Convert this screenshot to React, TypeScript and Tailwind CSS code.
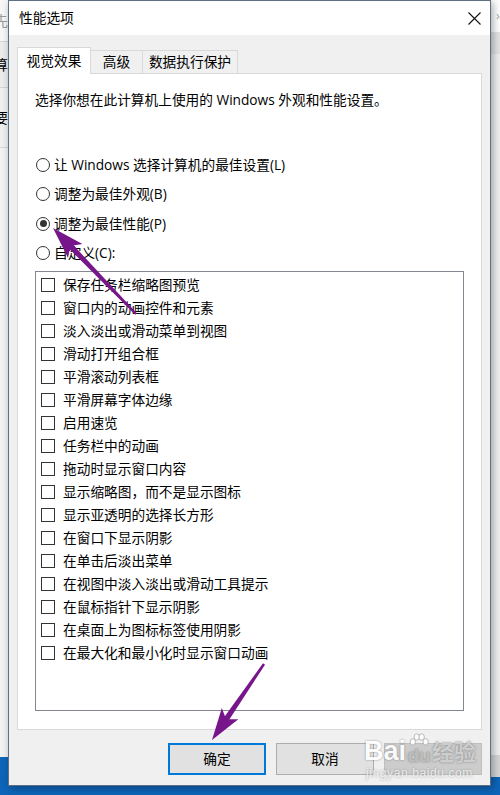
import React from "react";

const items = [
  "保存任务栏缩略图预览",
  "窗口内的动画控件和元素",
  "淡入淡出或滑动菜单到视图",
  "滑动打开组合框",
  "平滑滚动列表框",
  "平滑屏幕字体边缘",
  "启用速览",
  "任务栏中的动画",
  "拖动时显示窗口内容",
  "显示缩略图，而不是显示图标",
  "显示亚透明的选择长方形",
  "在窗口下显示阴影",
  "在单击后淡出菜单",
  "在视图中淡入淡出或滑动工具提示",
  "在鼠标指针下显示阴影",
  "在桌面上为图标标签使用阴影",
  "在最大化和最小化时显示窗口动画",
];

const radios = [
  { label: "让 Windows 选择计算机的最佳设置(L)", checked: false },
  { label: "调整为最佳外观(B)", checked: false },
  { label: "调整为最佳性能(P)", checked: true },
  { label: "自定义(C):", checked: false },
];

function Radio({ checked }: { checked?: boolean }) {
  return (
    <span className="w-[14px] h-[14px] rounded-full border border-[#333333] bg-white flex items-center justify-center shrink-0">
      {checked && <span className="w-[7px] h-[7px] rounded-full bg-[#333333]" />}
    </span>
  );
}

function Arrows() {
  const arrow = (tx: number, ty: number, ex: number, ey: number) => {
    const dx = ex - tx;
    const dy = ey - ty;
    const L = Math.hypot(dx, dy);
    const d = [dx / L, dy / L];
    const n = [-d[1], d[0]];
    const p = (s: number, w: number) => [tx + d[0] * s + n[0] * w, ty + d[1] * s + n[1] * w];
    const head = [p(0, 0), p(32, 10), p(25, 0), p(32, -10)];
    const shaft = [p(24, 2.8), p(L, 1.2), p(L, -1.2), p(24, -2.8)];
    const s = (pts: number[][]) => pts.map((q) => q.join(",")).join(" ");
    return (
      <g fill="#76168a">
        <polygon points={s(shaft)} />
        <polygon points={s(head)} />
      </g>
    );
  };
  return (
    <svg className="absolute left-0 top-0 pointer-events-none" width="500" height="795" viewBox="0 0 500 795">
      {arrow(53, 228, 136, 314)}
      {arrow(212, 740, 264, 664)}
    </svg>
  );
}

function Watermark() {
  return (
    <div className="absolute left-[364px] top-[731px] pointer-events-none flex flex-col items-start">
      <div className="flex items-end h-[34px] text-white font-['Liberation_Sans',sans-serif] [text-shadow:0_0_2px_rgba(80,80,80,0.7)] opacity-90">
        <span className="text-[27px] leading-[28px] font-bold">Bai</span>
        <span className="relative flex flex-col items-center w-[26px]">
          <svg width="22" height="16" viewBox="0 0 22 18" className="mb-[-2px]">
            <g fill="#ffffff" stroke="#9a9a9a" strokeWidth="0.8">
              <ellipse cx="4" cy="10" rx="3" ry="3.6" />
              <ellipse cx="8.5" cy="4.5" rx="3" ry="3.6" />
              <ellipse cx="14" cy="4.5" rx="3" ry="3.6" />
              <ellipse cx="18.5" cy="10" rx="3" ry="3.6" />
            </g>
          </svg>
          <span className="text-[19px] leading-[18px] font-bold text-[#bdbdbd]">du</span>
        </span>
        <span className="text-[22px] leading-[24px] mb-[3px] font-bold font-['Noto_Sans_CJK_SC',sans-serif] text-[#cfcfcf]">经验</span>
      </div>
      <span className="mt-[2px] text-[12px] leading-[13px] text-white/80 font-['Liberation_Sans',sans-serif] [text-shadow:0_0_2px_rgba(80,80,80,0.6)] tracking-[0.6px] ml-[2px]">
        jingyan.baidu.com
      </span>
    </div>
  );
}

export default function App() {
  return (
    <div className="relative w-[500px] h-[795px] overflow-hidden bg-gradient-to-b from-[#2aa4ec] to-[#0d64b8] font-['Open_Sans','Noto_Sans_CJK_SC',sans-serif] text-[#000000]">
      {/* background window */}
      <div className="absolute left-0 top-0 w-[500px] h-[757px] bg-[#f0f0f0] flex flex-col text-[14px] leading-[20px]">
        <div className="h-[42px] bg-[#f7f7f7] border-b border-[#d4d4d4] flex items-center text-[#9a9a9a] -ml-[6px]">先</div>
        <div className="h-[46px] bg-[#ececec] border-b border-[#d4d4d4] flex items-center -ml-[6px]">算</div>
        <div className="h-[60px] flex items-center -ml-[6px] border-b border-[#d8d8d8]">要</div>
        <div className="flex-1 bg-[#f3f3f3]" />
      </div>
      <div className="absolute right-0 top-0 w-[20px] h-[777px] bg-[#f0f0f0] flex flex-col">
        <div className="h-[32px] bg-white flex items-center justify-end text-[#aaaaaa] text-[13px]">›</div>
        <div className="h-[22px] bg-[#e4e4e4]" />
        <div className="flex-1" />
        <div className="h-[22px] bg-[#d6d6d6]" />
      </div>

      {/* dialog */}
      <div className="absolute left-[8px] top-0 w-[483px] h-[786px] border border-[#5f6f84] bg-[#f0f0f0] flex flex-col shadow-[2px_2px_8px_rgba(0,0,0,0.35)]">
        {/* title bar */}
        <div className="h-[34px] bg-white flex items-center justify-between pl-[10px] pr-[9px] shrink-0">
          <span className="text-[13.7px] leading-[20px]">性能选项</span>
          <svg width="13" height="13" viewBox="0 0 13 13">
            <path d="M0.5 0.5 L12.5 12.5 M12.5 0.5 L0.5 12.5" stroke="#111111" strokeWidth="1.1" />
          </svg>
        </div>

        {/* body */}
        <div className="flex-1 flex flex-col pt-[12px] pl-[8px] pr-[8px]">
          {/* tabs */}
          <div className="flex items-end h-[26px] text-[13.7px] leading-[20px]">
            <div className="relative z-10 w-[74px] h-[27px] -mb-px bg-white border border-b-0 border-[#d9d9d9] flex items-center justify-center">
              视觉效果
            </div>
            <div className="-ml-px w-[53px] h-[23px] bg-[#f0f0f0] border border-b-0 border-[#d9d9d9] flex items-center justify-center">
              高级
            </div>
            <div className="-ml-px w-[96px] h-[23px] bg-[#f0f0f0] border border-b-0 border-[#d9d9d9] flex items-center justify-center">
              数据执行保护
            </div>
          </div>

          {/* panel */}
          <div className="h-[657px] w-[465px] bg-white border border-[#d9d9d9] flex flex-col px-[17px] pt-[16px] text-[13.7px]">
            <div className="h-[20px] leading-[20px] whitespace-nowrap">选择你想在此计算机上使用的 Windows 外观和性能设置。</div>
            <div className="mt-[40px] flex flex-col">
              {radios.map((r) => (
                <div key={r.label} className="h-[29.5px] flex items-center gap-[4px] ml-[1px] leading-[20px] whitespace-nowrap">
                  <Radio checked={r.checked} />
                  <span>{r.label}</span>
                </div>
              ))}
            </div>
            <div className="mt-[3px] w-[429px] h-[440px] border border-[#828790] bg-white flex flex-col pt-[1px] pl-[5px]">
              {items.map((t) => (
                <div key={t} className="h-[23px] flex items-center gap-[8px] leading-[20px] whitespace-nowrap">
                  <span className="w-[14px] h-[14px] border border-[#333333] bg-white shrink-0" />
                  <span>{t}</span>
                </div>
              ))}
            </div>
          </div>

          {/* buttons */}
          <div className="mt-[13px] flex justify-end gap-[10px] text-[13.7px] leading-[20px]">
            <div className="w-[98px] h-[32px] bg-[#e1e1e1] border-2 border-[#0078d7] flex items-center justify-center">确定</div>
            <div className="w-[98px] h-[32px] bg-[#e1e1e1] border border-[#adadad] flex items-center justify-center">取消</div>
            <div className="w-[98px] h-[32px] bg-[#cccccc] border border-[#bfbfbf]" />
          </div>
        </div>
      </div>

      <Arrows />
      <Watermark />
    </div>
  );
}
